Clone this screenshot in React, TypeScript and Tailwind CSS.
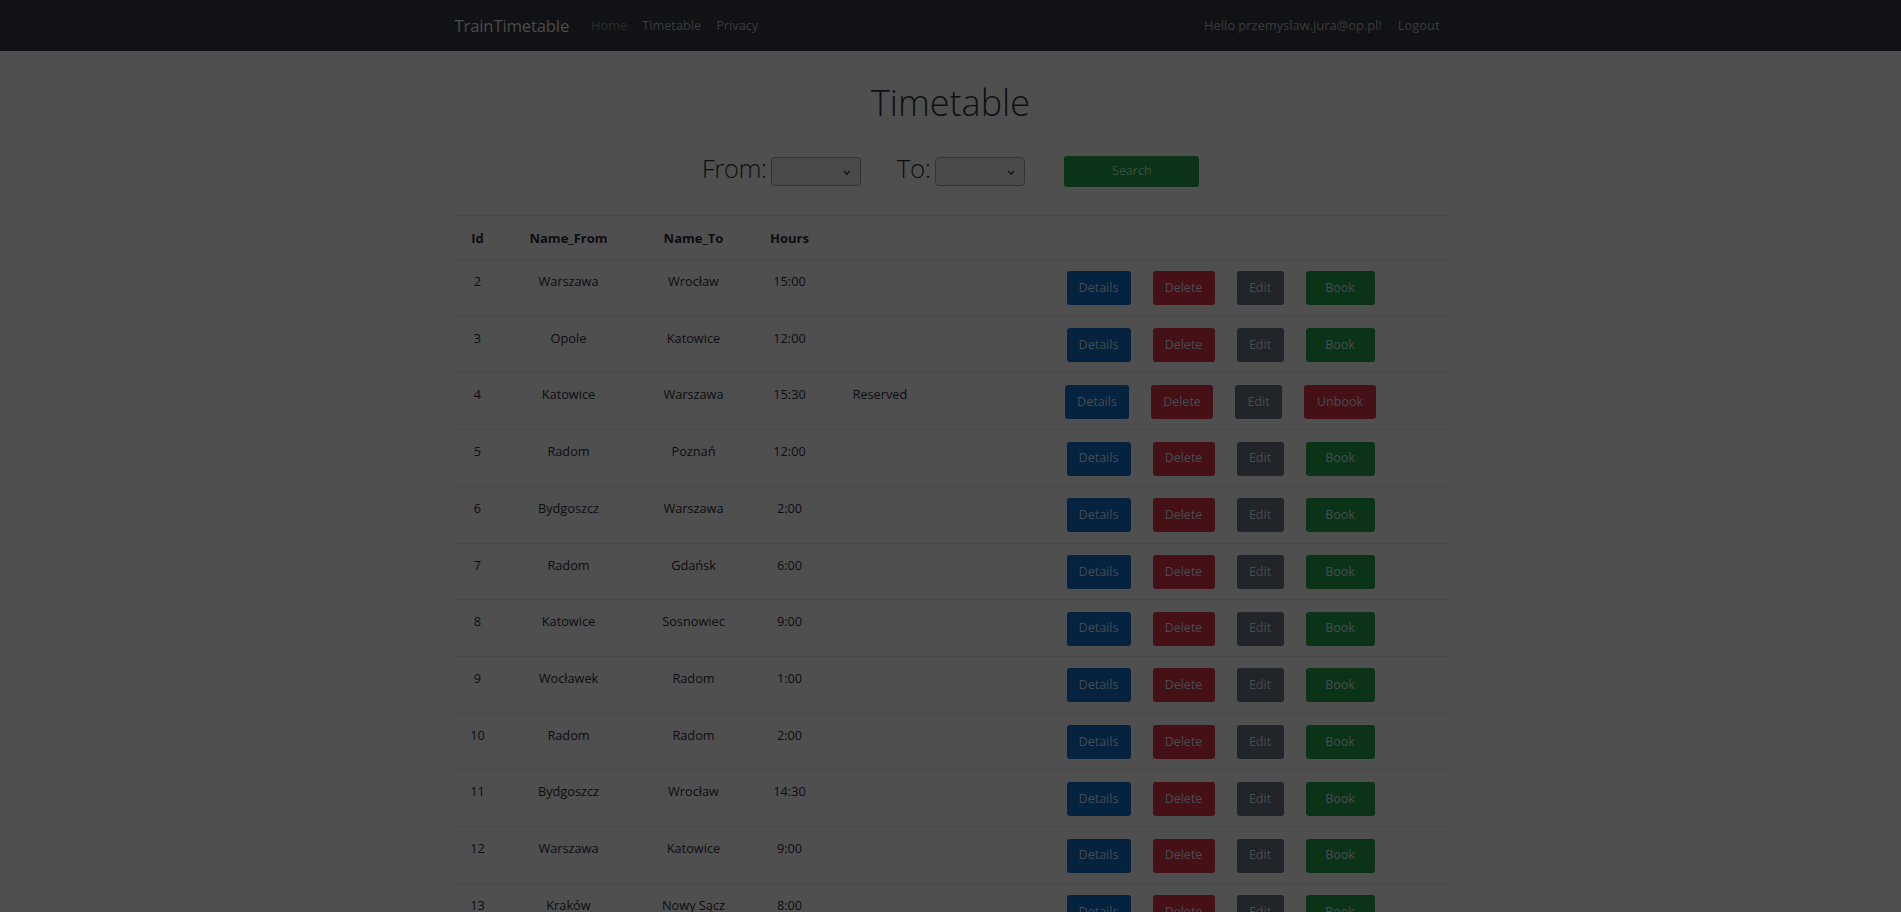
import React from 'react';

interface Route {
  id: number;
  from: string;
  to: string;
  hours: string;
  reserved?: boolean;
}

const routes: Route[] = [
  { id: 2, from: 'Warszawa', to: 'Wrocław', hours: '15:00' },
  { id: 3, from: 'Opole', to: 'Katowice', hours: '12:00' },
  { id: 4, from: 'Katowice', to: 'Warszawa', hours: '15:30', reserved: true },
  { id: 5, from: 'Radom', to: 'Poznań', hours: '12:00' },
  { id: 6, from: 'Bydgoszcz', to: 'Warszawa', hours: '2:00' },
  { id: 7, from: 'Radom', to: 'Gdańsk', hours: '6:00' },
  { id: 8, from: 'Katowice', to: 'Sosnowiec', hours: '9:00' },
  { id: 9, from: 'Wocławek', to: 'Radom', hours: '1:00' },
  { id: 10, from: 'Radom', to: 'Radom', hours: '2:00' },
  { id: 11, from: 'Bydgoszcz', to: 'Wrocław', hours: '14:30' },
  { id: 12, from: 'Warszawa', to: 'Katowice', hours: '9:00' },
  { id: 13, from: 'Kraków', to: 'Nowy Sącz', hours: '8:00' },
  { id: 14, from: 'Opole', to: 'Radom', hours: '10:00' },
];

const cols = 'grid grid-cols-[44px_138px_112px_80px_166px_1fr]';

const Select: React.FC = () => (
  <div className="relative h-[29px] w-[90px] rounded-[4px] border border-[#343434] bg-[#4a4a4a]">
    <svg
      className="absolute right-[9px] top-[12px]"
      width="8"
      height="5"
      viewBox="0 0 8 5"
      fill="none"
      stroke="#141414"
      strokeWidth="1.6"
    >
      <path d="M1 1l3 3 3-3" />
    </svg>
  </div>
);

const Btn: React.FC<{ label: string; cls: string }> = ({ label, cls }) => (
  <button className={`h-[34px] rounded-[3px] text-[12.5px] leading-none text-[#454c52] ${cls}`}>{label}</button>
);

export default function App() {
  return (
    <div className="h-screen overflow-hidden bg-[#4f4f4f] font-['Open_Sans','Noto_Sans',sans-serif] text-[#0c0d0f]">
      {/* navbar */}
      <nav className="h-[51px] bg-[#111215]">
        <div className="mx-auto flex h-full w-[990px] items-center">
          <span className="-ml-[1px] text-[16.75px] tracking-[-0.2px] text-[#4b4b4b]">TrainTimetable</span>
          <div className="ml-[22px] flex gap-[15px] text-[12.75px]">
            <span className="text-[#2c2d2f]">Home</span>
            <span className="text-[#3a3b3d]">Timetable</span>
            <span className="text-[#3a3b3d]">Privacy</span>
          </div>
          <div className="ml-auto mr-[6px] flex gap-[16px] text-[12.9px] text-[#3a3b3d]">
            <span>Hello przemyslaw.jura@op.pl!</span>
            <span>Logout</span>
          </div>
        </div>
      </nav>

      <main className="mx-auto w-[990px]">
        <h1 className="mt-[30px] text-center text-[36px] font-light leading-[44px] text-[#0e0f12]">
          Timetable
        </h1>

        <div className="mt-[31px] flex h-[31px] items-center justify-center">
          <span className="mb-[6px] mr-[4px] text-[26px] font-light tracking-[-0.5px] text-[#0e0f12]">From:</span>
          <Select />
          <span className="mb-[6px] ml-[36px] mr-[5px] text-[26px] font-light tracking-[-0.5px] text-[#0e0f12]">To:</span>
          <Select />
          <button className="ml-[39px] h-[31px] w-[135px] rounded-[3px] bg-[#0b3318] text-[12.5px] text-[#3d4f42]">
            Search
          </button>
        </div>

        {/* table */}
        <div className="mt-[28px] border-t border-[#474849] text-[12.75px] leading-[18px]">
          <div className={`${cols} h-[44px] border-b border-[#474849] text-center text-[13px] font-bold`}>
            <div className="pt-[13px]">Id</div>
            <div className="pt-[13px]">Name_From</div>
            <div className="pt-[13px]">Name_To</div>
            <div className="pt-[13px]">Hours</div>
            <div />
            <div />
          </div>
          {routes.map((r) => (
            <div key={r.id} className={`${cols} h-[56.73px] border-b border-[#474849] text-center`}>
              <div className="pt-[12px]">{r.id}</div>
              <div className="pt-[12px]">{r.from}</div>
              <div className="pt-[12px]">{r.to}</div>
              <div className="pt-[12px]">{r.hours}</div>
              <div className="pl-[23px] pt-[12px] text-left">{r.reserved ? 'Reserved' : ''}</div>
              <div className="flex items-center justify-center gap-[22px] pt-[1px]">
                <Btn label="Details" cls="w-[64px] bg-[#05223f]" />
                <Btn label="Delete" cls="w-[62px] bg-[#451116]" />
                <Btn label="Edit" cls="w-[47px] bg-[#212428]" />
                {r.reserved ? (
                  <Btn label="Unbook" cls="w-[72px] bg-[#451116]" />
                ) : (
                  <Btn label="Book" cls="w-[69px] bg-[#0b3318]" />
                )}
              </div>
            </div>
          ))}
        </div>
      </main>
    </div>
  );
}
